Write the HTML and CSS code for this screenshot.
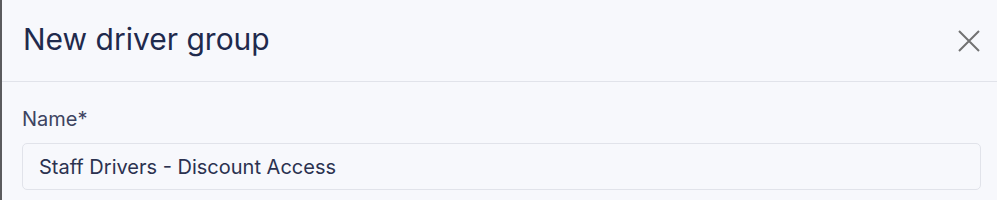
FILE: index.html
```html
<!DOCTYPE html>
<html lang="en">
<head>
    <meta charset="UTF-8">
    <title>New driver group</title>
    <link rel="stylesheet" href="styles.css">
</head>
<body>
    <div class="modal">
        <div class="modal-header">
            <h2 class="modal-title">New driver group</h2>
            <button class="close-btn" aria-label="Close">
                <svg width="22" height="22" viewBox="0 0 22 22">
                    <path d="M1 1L21 21M21 1L1 21" stroke="currentColor" stroke-width="2" fill="none"/>
                </svg>
            </button>
        </div>
        <div class="modal-body">
            <label class="field-label" for="groupName">Name*</label>
            <input class="field-input" id="groupName" type="text" value="Staff Drivers - Discount Access">
        </div>
    </div>
</body>
</html>
```

FILE: styles.css
```css
body {
    margin: 0;
    font-family: Inter, "Noto Sans", sans-serif;
    background-color: #f7f8fc;
    border-left: 2px solid #5b5b5e;
    min-height: 200px;
    box-sizing: border-box;
}

.modal {
    background-color: #f7f8fc;
}

.modal-header {
    display: flex;
    justify-content: space-between;
    align-items: center;
    height: 82px;
    padding: 0 17px 0 21px;
    border-bottom: 1px solid #e1e3ea;
    box-sizing: border-box;
}

.modal-title {
    margin: 0 0 3px;
    font-size: 30px;
    line-height: 36px;
    font-weight: 400;
    color: #1f2a4d;
}

.close-btn {
    background: none;
    border: none;
    padding: 0;
    color: #727272;
    cursor: pointer;
    display: flex;
}

.modal-body {
    padding: 25px 16px 0 20px;
}

.field-label {
    display: block;
    font-size: 20px;
    line-height: 24px;
    color: #3d4461;
    margin-bottom: 12px;
}

.field-input {
    display: block;
    width: 100%;
    box-sizing: border-box;
    height: 47px;
    padding: 0 16px;
    font-family: inherit;
    font-size: 20px;
    color: #2b3250;
    background-color: #f7f8fc;
    border: 1px solid #e1e3ea;
    border-radius: 5px;
    outline: none;
}
```
